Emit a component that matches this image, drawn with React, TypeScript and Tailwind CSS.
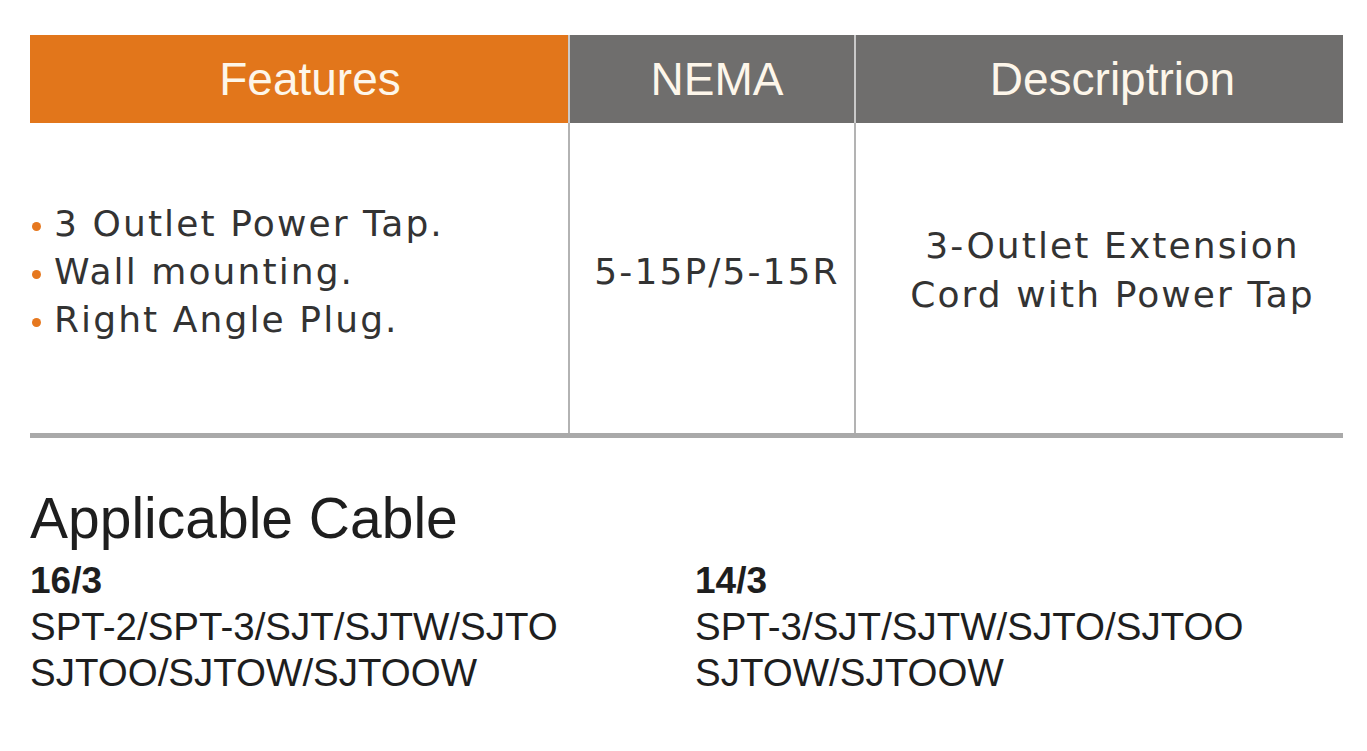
import React from "react";

const bodyFont = { fontFamily: '"DejaVu Sans", sans-serif' };

export default function App() {
  return (
    <div className="w-[1367px] h-[751px] bg-white overflow-hidden" style={{ fontFamily: '"Liberation Sans", Arial, sans-serif' }}>
      <div className="ml-[30px] w-[1313px] pt-[35px]">
        {/* header */}
        <div className="flex h-[88px] text-[46px] text-[#fdf6ea] leading-none">
          <div className="w-[538px] bg-[#e2761b] flex items-center justify-center pl-[22px]">Features</div>
          <div className="w-[2px] bg-[#c9c9c9]" />
          <div className="w-[284px] bg-[#6f6e6d] flex items-center justify-center pl-[10px]">NEMA</div>
          <div className="w-[2px] bg-[#c9c9c9]" />
          <div className="flex-1 bg-[#6f6e6d] flex items-center justify-center pl-[26px]">Descriptrion</div>
        </div>
        {/* body */}
        <div className="flex h-[310px] text-[36px] text-[#333333] tracking-[2.1px]" style={bodyFont}>
          <div className="w-[538px] flex flex-col justify-center pb-[12px] leading-[48px]">
            {["3 Outlet Power Tap.", "Wall mounting.", "Right Angle Plug."].map((t) => (
              <div key={t} className="flex items-center">
                <span className="w-[9px] h-[9px] rounded-full bg-[#e6781f] ml-[2px] mr-[13px] mt-[4px]" />
                <span>{t}</span>
              </div>
            ))}
          </div>
          <div className="w-[2px] bg-[#b3b3b3]" />
          <div className="w-[284px] flex items-center justify-center pl-[10px] pb-[12px]">5-15P/5-15R</div>
          <div className="w-[2px] bg-[#b3b3b3]" />
          <div className="flex-1 flex flex-col items-center justify-center pl-[26px] pb-[16px] leading-[49px] text-center">
            <div>3-Outlet Extension</div>
            <div>Cord with Power Tap</div>
          </div>
        </div>
        <div className="h-[5px] bg-[#a9a9a9]" />
        {/* applicable cable */}
        <div className="mt-[52px] text-[57px] leading-[56px] text-[#1e1e1e]">Applicable Cable</div>
        <div className="mt-[12px] flex text-[#1e1e1e]">
          <div className="w-[665px]">
            <div className="text-[37px] leading-[46px] font-bold">16/3</div>
            <div className="text-[38.5px] leading-[46px]">SPT-2/SPT-3/SJT/SJTW/SJTO</div>
            <div className="text-[38.5px] leading-[46px]">SJTOO/SJTOW/SJTOOW</div>
          </div>
          <div>
            <div className="text-[37px] leading-[46px] font-bold">14/3</div>
            <div className="text-[38.5px] leading-[46px]">SPT-3/SJT/SJTW/SJTO/SJTOO</div>
            <div className="text-[38.5px] leading-[46px]">SJTOW/SJTOOW</div>
          </div>
        </div>
      </div>
    </div>
  );
}
